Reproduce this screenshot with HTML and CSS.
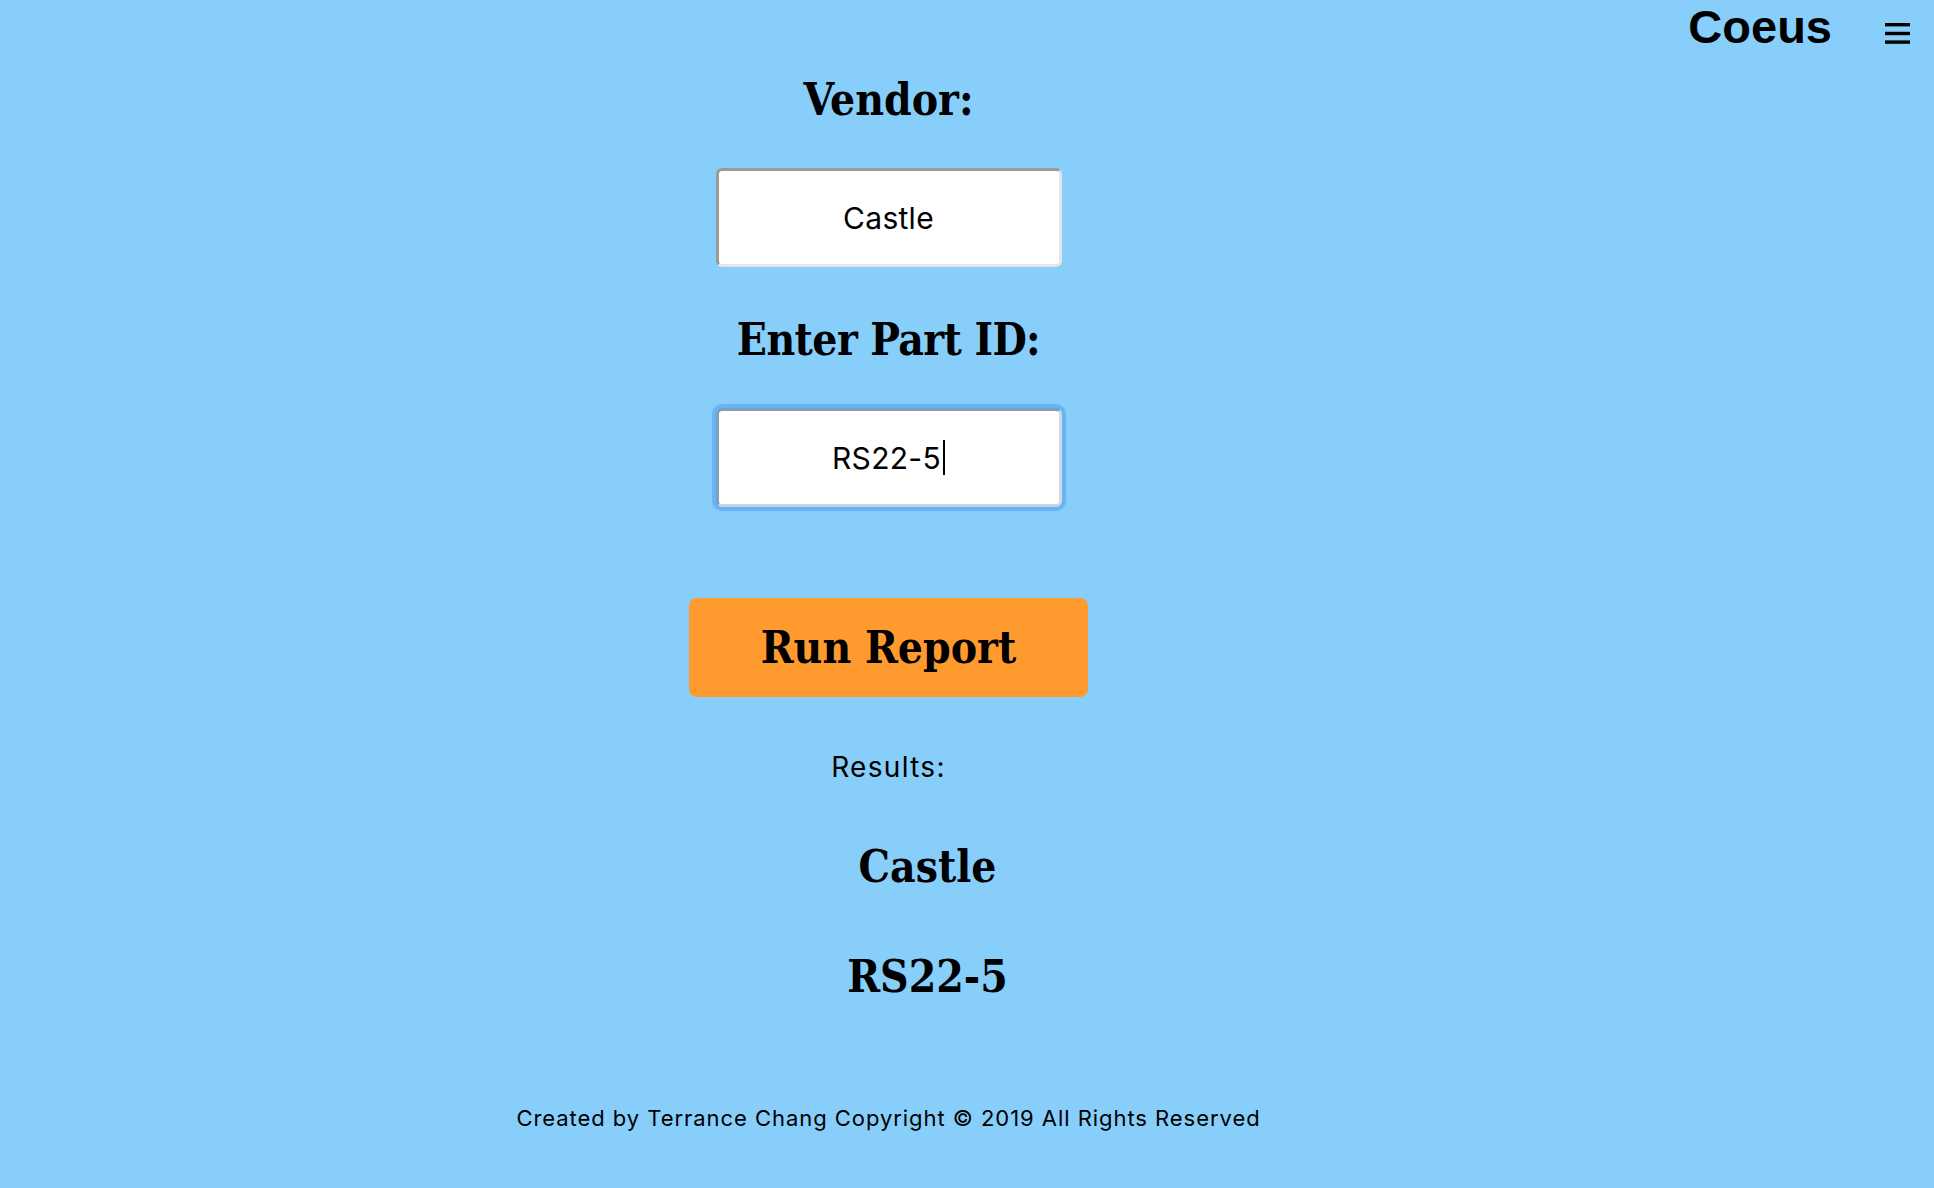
FILE: index.html
```html
<!DOCTYPE html>
<html lang="en">
<head>
<meta charset="utf-8">
<title>Coeus</title>
<link rel="stylesheet" href="styles.css">
</head>
<body>
<header class="topbar">
  <span class="brand">Coeus</span>
  <span class="menu" aria-label="Menu">
    <svg width="25" height="21" viewBox="0 0 25 21"><rect x="0" y="0" width="25" height="3.4"/><rect x="0" y="8.8" width="25" height="3.4"/><rect x="0" y="17.4" width="25" height="3.4"/></svg>
  </span>
</header>
<main class="main">
  <h2 class="label label-vendor">Vendor:</h2>
  <div class="field">Castle</div>
  <h2 class="label label-part">Enter Part ID:</h2>
  <div class="field field-focus">RS22-5<span class="caret"></span></div>
  <button class="run">Run Report</button>
  <p class="results-title">Results:</p>
  <ul class="results">
    <li class="result result-first">Castle</li>
    <li class="result result-second">RS22-5</li>
  </ul>
  <footer class="footer">Created by Terrance Chang Copyright © 2019 All Rights Reserved</footer>
</main>
</body>
</html>
```
FILE: styles.css
```css
html, body {
  margin: 0;
  padding: 0;
  background: #87cefa;
  color: #000;
}
body {
  width: 1934px;
  min-height: 1188px;
  font-family: Inter, "Noto Sans", sans-serif;
}
.topbar {
  height: 54px;
  display: flex;
  justify-content: flex-end;
  align-items: flex-start;
}
.brand {
  font-family: "Liberation Sans", Arial, sans-serif;
  font-weight: 700;
  font-size: 47px;
  line-height: 54px;
}
.menu {
  margin-left: 53px;
  margin-right: 24px;
  padding-top: 23px;
  display: flex;
}
.menu svg { fill: #000; display: block; }

.main {
  width: 1777px;
  display: flex;
  flex-direction: column;
  align-items: center;
  text-align: center;
}
.label, .run, .result {
  font-family: "DejaVu Serif Condensed", "DejaVu Serif", serif;
  font-weight: 700;
  font-size: 44px;
  line-height: 60px;
}
.label {
  margin: 0;
}
.label-vendor { margin-top: 16px; }
.label-part { margin-top: 43px; letter-spacing: -0.6px; }
.field {
  margin-top: 38px;
  box-sizing: border-box;
  width: 346px;
  height: 99px;
  background: #fff;
  border: 3px solid;
  border-color: #9a9a9a #e6e6e6 #e6e6e6 #9a9a9a;
  border-radius: 6px;
  font-size: 30px;
  letter-spacing: 0.3px;
  display: flex;
  align-items: center;
  justify-content: center;
}
.field-focus {
  border-color: #7f9fbd #d0d8e0 #c8d4e0 #7f9fbd;
  box-shadow: 0 0 1px 4px #66b3f8;
}
.caret {
  display: inline-block;
  width: 2px;
  height: 35px;
  margin-left: 2px;
  background: #000;
}
.run {
  margin-top: 91px;
  width: 399px;
  height: 99px;
  border: 0;
  border-radius: 8px;
  background: #ff9a2f;
  color: #000;
  padding: 0;
}
.results-title {
  margin: 53px 0 0;
  font-size: 28px;
  line-height: 34px;
  letter-spacing: 1.3px;
}
.results {
  list-style: none;
  margin: 53px 0 0;
  padding: 0 0 0 78px;
}
.result-second { margin-top: 50px; }
.footer {
  margin-top: 98px;
  font-size: 22px;
  line-height: 27px;
  letter-spacing: 0.95px;
}
```
